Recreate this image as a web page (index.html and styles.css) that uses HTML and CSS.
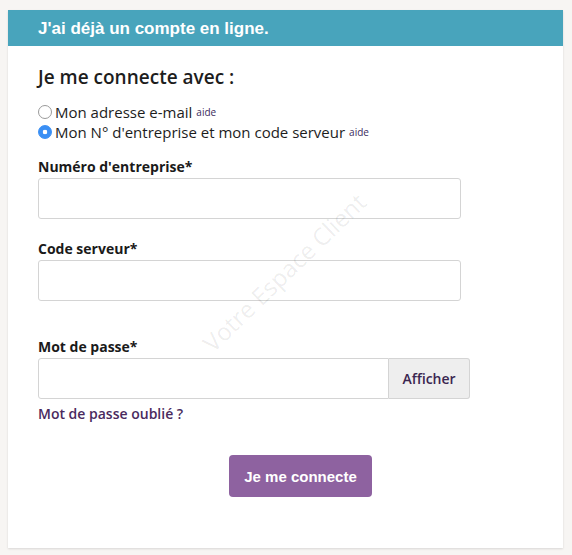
FILE: index.html
```html
<!DOCTYPE html>
<html lang="fr">
<head>
    <meta charset="UTF-8">
    <title>Connexion</title>
    <link rel="stylesheet" href="styles.css">
</head>
<body>
    <div class="login-card">
        <div class="card-header">J'ai déjà un compte en ligne.</div>
        <form class="card-body">
            <span class="watermark">Votre Espace Client</span>
            <h2>Je me connecte avec :</h2>
            <div class="choices">
                <label class="choice"><input type="radio" name="mode"> Mon adresse e-mail <a href="#">aide</a></label>
                <label class="choice"><input type="radio" name="mode" checked> Mon N° d'entreprise et mon code serveur <a href="#">aide</a></label>
            </div>

            <div class="field">
                <label>Numéro d'entreprise*</label>
                <input type="text">
            </div>
            <div class="field">
                <label>Code serveur*</label>
                <input type="text">
            </div>
            <div class="field field-pass">
                <label>Mot de passe*</label>
                <div class="input-group">
                    <input type="password">
                    <button type="button" class="show-btn">Afficher</button>
                </div>
                <a href="#" class="forgot">Mot de passe oublié ?</a>
            </div>

            <div class="actions">
                <button type="submit" class="submit-btn">Je me connecte</button>
            </div>
        </form>
    </div>
</body>
</html>
```

FILE: styles.css
```css
body {
    font-family: "Open Sans", sans-serif;
    background-color: #f7f5f3;
    margin: 0;
    padding: 10px 9px 7px 8px;
    color: #222;
}
.login-card {
    width: 555px;
    background: #fff;
    box-shadow: 0 1px 2px rgba(0, 0, 0, 0.12);
}
.card-header {
    background: #48a4bc;
    color: #fff;
    font-family: "Liberation Sans", Arial, sans-serif;
    font-weight: 700;
    font-size: 17px;
    height: 36px;
    line-height: 37px;
    padding-left: 30px;
}
.card-body {
    position: relative;
    padding: 19px 30px 51px 30px;
}
.watermark {
    position: absolute;
    left: 276px;
    top: 226px;
    transform: translate(-50%, -50%) rotate(-44deg);
    color: rgba(0, 0, 0, 0.08);
    font-size: 24px;
    white-space: nowrap;
    pointer-events: none;
}
h2 {
    font-size: 19px;
    font-weight: 600;
    margin: 0 0 13px 0;
    line-height: 24px;
    color: #1d1d1d;
}
.choices {
    font-size: 15px;
    color: #1d1d1d;
}
.choice {
    display: flex;
    align-items: center;
    height: 20px;
}
.choice input {
    appearance: none;
    box-sizing: border-box;
    margin: 0 3px 0 0;
    width: 14px;
    height: 14px;
    border: 1px solid #9a9a9a;
    border-radius: 50%;
    background: #fff;
}
.choice input:checked {
    border-color: #3a8ff4;
    background: radial-gradient(circle, #fff 2px, #3a8ff4 2.6px);
}
.choice a {
    font-size: 10px;
    color: #3b2a5c;
    text-decoration: none;
    margin-left: 4px;
    align-self: flex-end;
    margin-bottom: 3px;
}
.field {
    margin-top: 16px;
}
.field + .field {
    margin-top: 21px;
}
.field.field-pass {
    margin-top: 37px;
}
.field label {
    display: block;
    font-weight: 700;
    font-size: 14px;
    line-height: 18px;
    margin-bottom: 2px;
    color: #1a1a1a;
}
input[type="text"],
input[type="password"] {
    box-sizing: border-box;
    width: 423px;
    height: 41px;
    border: 1px solid #d4d4d4;
    border-radius: 3px;
    font-size: 14px;
}
.input-group {
    display: flex;
    width: 432px;
}
.input-group input[type="password"] {
    width: 351px;
    border-radius: 3px 0 0 3px;
}
.show-btn {
    flex: 1;
    height: 41px;
    border: 1px solid #d4d4d4;
    border-left: none;
    border-radius: 0 3px 3px 0;
    background: #eeeeee;
    color: #3a2650;
    font-family: inherit;
    font-weight: 600;
    font-size: 14px;
}
.forgot {
    display: block;
    margin-top: 6px;
    line-height: 18px;
    color: #4a2a5e;
    font-weight: 600;
    font-size: 14px;
    text-decoration: none;
}
.actions {
    text-align: center;
    margin-top: 32px;
}
.submit-btn {
    width: 143px;
    height: 42px;
    background: #8e62a0;
    color: #fff;
    border: none;
    border-radius: 4px;
    font-family: "Liberation Sans", Arial, sans-serif;
    font-weight: 700;
    font-size: 15px;
    margin-left: 30px;
}
```
